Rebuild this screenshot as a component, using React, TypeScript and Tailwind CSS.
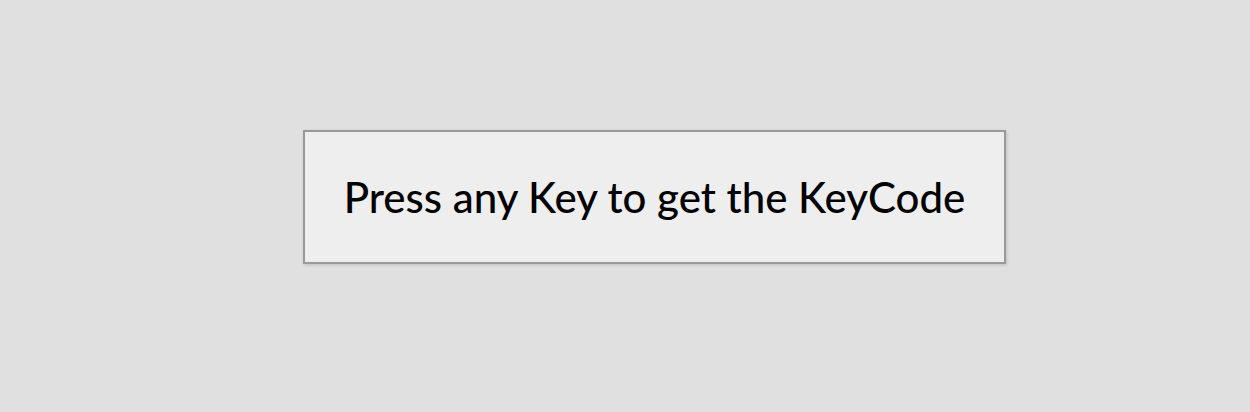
import React from 'react';

const App: React.FC = () => {
  return (
    <div className="min-h-[412px] w-full bg-[#e0e0e0] pt-[130px] pl-[303px]">
      <div className="flex h-[134px] w-[703px] items-center justify-center border-2 border-[#999999] bg-[#eeeeee] shadow-[1px_1px_3px_rgba(0,0,0,0.15)]">
        <h1 className="font-['Lato',sans-serif] text-[42px] font-medium text-black leading-none">
          Press any Key to get the KeyCode
        </h1>
      </div>
    </div>
  );
};

export default App;
